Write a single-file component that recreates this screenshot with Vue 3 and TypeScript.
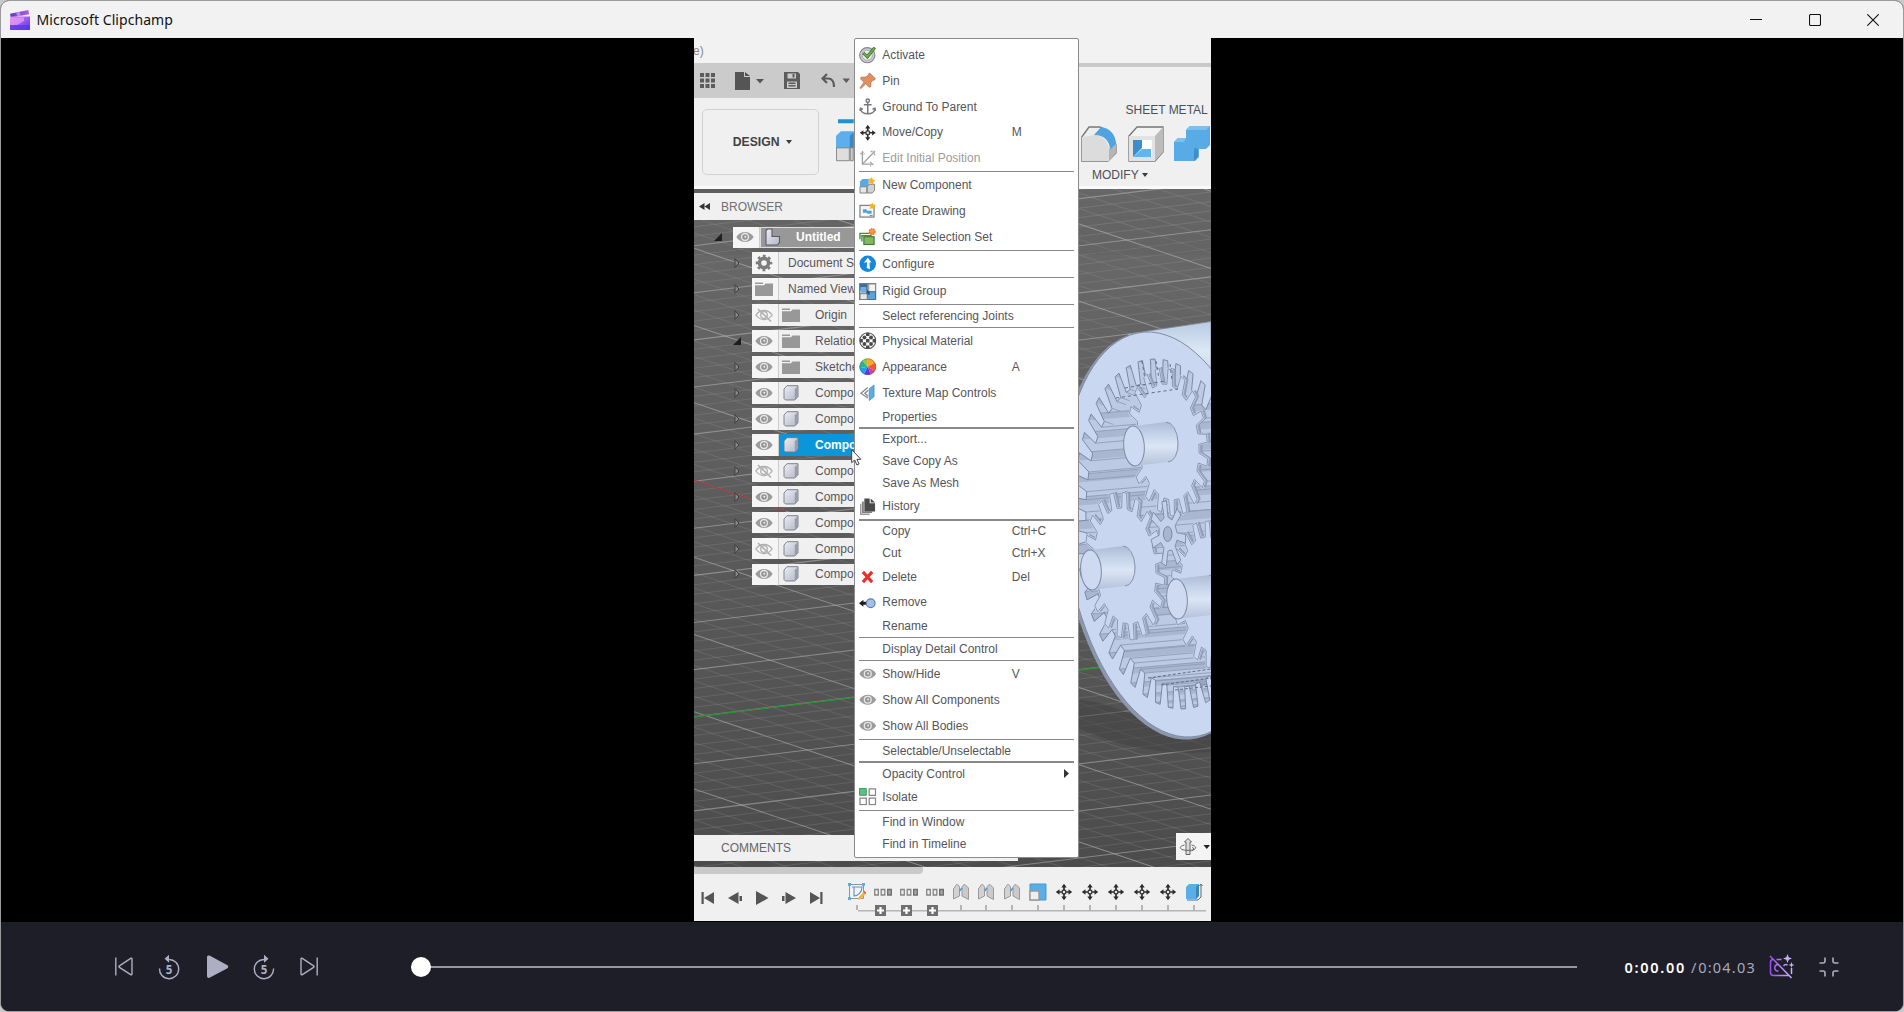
<script setup lang="ts">
interface MenuItem {
  label?: string
  icon?: string
  key?: string
  dim?: boolean
  sub?: boolean
  sep?: boolean
}

const sep: MenuItem = { sep: true }
const menu: MenuItem[] = [
  { label: 'Activate', icon: 'check' },
  { label: 'Pin', icon: 'pin' },
  { label: 'Ground To Parent', icon: 'anchor' },
  { label: 'Move/Copy', icon: 'move', key: 'M' },
  { label: 'Edit Initial Position', icon: 'axes', dim: true },
  sep,
  { label: 'New Component', icon: 'newcomp' },
  { label: 'Create Drawing', icon: 'drawing' },
  { label: 'Create Selection Set', icon: 'selset' },
  sep,
  { label: 'Configure', icon: 'configure' },
  sep,
  { label: 'Rigid Group', icon: 'rigid' },
  sep,
  { label: 'Select referencing Joints' },
  sep,
  { label: 'Physical Material', icon: 'material' },
  { label: 'Appearance', icon: 'wheel', key: 'A' },
  { label: 'Texture Map Controls', icon: 'texture' },
  { label: 'Properties' },
  sep,
  { label: 'Export...' },
  { label: 'Save Copy As' },
  { label: 'Save As Mesh' },
  { label: 'History', icon: 'history' },
  sep,
  { label: 'Copy', key: 'Ctrl+C' },
  { label: 'Cut', key: 'Ctrl+X' },
  { label: 'Delete', icon: 'delete', key: 'Del' },
  { label: 'Remove', icon: 'remove' },
  { label: 'Rename' },
  sep,
  { label: 'Display Detail Control' },
  sep,
  { label: 'Show/Hide', icon: 'eye', key: 'V' },
  { label: 'Show All Components', icon: 'eye' },
  { label: 'Show All Bodies', icon: 'eye' },
  sep,
  { label: 'Selectable/Unselectable' },
  sep,
  { label: 'Opacity Control', sub: true },
  { label: 'Isolate', icon: 'isolate' },
  sep,
  { label: 'Find in Window' },
  { label: 'Find in Timeline' },
]

interface Node {
  label: string
  eye?: 'eye' | 'eyeoff'
  icon: string
  open?: boolean
  active?: boolean
}
const nodes: Node[] = [
  { label: 'Document S', icon: 'cog' },
  { label: 'Named View', icon: 'folder' },
  { label: 'Origin', eye: 'eyeoff', icon: 'folder' },
  { label: 'Relation', eye: 'eye', icon: 'folder', open: true },
  { label: 'Sketche', eye: 'eye', icon: 'folder' },
  { label: 'Compo', eye: 'eye', icon: 'body' },
  { label: 'Compo', eye: 'eye', icon: 'body' },
  { label: 'Compo', eye: 'eye', icon: 'body', active: true },
  { label: 'Compo', eye: 'eyeoff', icon: 'body' },
  { label: 'Compo', eye: 'eye', icon: 'body' },
  { label: 'Compo', eye: 'eye', icon: 'body' },
  { label: 'Compo', eye: 'eyeoff', icon: 'body' },
  { label: 'Compo', eye: 'eye', icon: 'body' },
]

const features = [
  'sketch', 'pattern', 'pattern', 'pattern', 'joint', 'joint', 'joint', 'scale',
  'move', 'move', 'move', 'move', 'move', 'cube',
]
const transport = ['first', 'stepback', 'play', 'stepfwd', 'last']

/* Viewport floor grid: two families of parallel lines, every fifth one stronger. */
interface Line { x1: number; y1: number; x2: number; y2: number; major: boolean }
const grid: Line[] = []
for (let i = -60; i <= 26; i++) {
  const y = 716.7 + i * 9.42
  grid.push({ x1: 694, y1: y, x2: 1211, y2: y - 517 * 0.122, major: i % 5 === 0 })
}
for (let i = -36; i <= 26; i++) {
  const y = 480 + i * 15.45
  grid.push({ x1: 694, y1: y, x2: 1211, y2: y + 517 * 0.338, major: i % 5 === 0 })
}

/* Circles in the gear plane are seen as sheared ellipses. */
type Pt = [number, number]
function project(cx: number, cy: number, r: number, t: number, wide = 0.531, shear = 0.077): Pt {
  return [cx + r * (wide * Math.cos(t) - shear * Math.sin(t)), cy - r * Math.sin(t)]
}
function toothPoints(cx: number, cy: number, root: number, tip: number, n: number, phase: number, w: number): Pt[] {
  const pts: Pt[] = []
  const step = (Math.PI * 2) / n
  for (let i = 0; i < n; i++) {
    const a = i * step + phase
    pts.push(project(cx, cy, root, a - step * w))
    pts.push(project(cx, cy, tip, a - step * w * 0.6))
    pts.push(project(cx, cy, tip, a + step * w * 0.6))
    pts.push(project(cx, cy, root, a + step * w))
  }
  return pts
}
const toPath = (pts: Pt[]): string =>
  'M' + pts.map(([x, y]) => `${x.toFixed(1)} ${y.toFixed(1)}`).join('L') + 'Z'

const ringPts = toothPoints(1168, 534, 153, 175, 46, Math.PI / 2 + 0.02, 0.3)
const cavity = toPath(ringPts)
const centers: Pt[] = [[1168, 442], [1125, 566], [1211, 595]]
const phases = [0.05, 0.12, 0.2]
const gears = centers.map(([x, y], i) => ({ x, y, d: toPath(toothPoints(x, y, 58, 74, 19, phases[i], 0.27)) }))
const sun = toPath(toothPoints(1168, 534, 17, 33, 7, 0.75, 0.25))
const ellipse = (cx: number, cy: number, r: number) =>
  toPath(Array.from({ length: 90 }, (_, i) => project(cx, cy, r, (i / 45) * Math.PI, 0.512, 0.1)))
const shell = ellipse(1168, 534.5, 202.5)
const rim = ellipse(1165.5, 536, 203.5)

/* Internal teeth run back into the housing: one swept face per tooth gap plus edge lines. */
interface Flute { face: string; edge: string }
const flutes: Flute[] = []
for (let i = 0; i < 46; i++) {
  const [a, b, c, d] = ringPts.slice(i * 4, i * 4 + 4)
  const upper = b[1] < 405
  if (b[0] > 1172 && b[1] < 560) continue
  const dx = upper ? 9 : 150
  const dy = upper ? 3 : -13
  flutes.push({
    face: `M${b[0]} ${b[1]}L${c[0]} ${c[1]}l${dx} ${dy}L${b[0] + dx} ${b[1] + dy}z`,
    edge: `M${a[0]} ${a[1]}l${dx} ${dy}M${d[0]} ${d[1]}l${dx} ${dy}M${b[0]} ${b[1]}l${dx} ${dy}`,
  })
}
</script>

<template>
  <div class="window">
    <svg class="defs" width="0" height="0" aria-hidden="true">
      <defs>
        <linearGradient id="g-metal" x1="0" y1="0" x2="1" y2="1">
          <stop offset="0" stop-color="#eceef5" /><stop offset="1" stop-color="#b3b7c5" />
        </linearGradient>
        <linearGradient id="g-violet" x1="0" y1="0" x2="1" y2="0">
          <stop offset="0" stop-color="#9a4ff0" /><stop offset="1" stop-color="#c9b4f7" />
        </linearGradient>
        <linearGradient id="g-floor" x1="0" y1="0" x2="0" y2="1">
          <stop offset="0" stop-color="#6a6a6a" /><stop offset="1" stop-color="#4c4c4c" />
        </linearGradient>
        <linearGradient id="g-shaft" x1="0" y1="0" x2="0" y2="1">
          <stop offset="0" stop-color="#aebbd4" /><stop offset=".3" stop-color="#c6d4ec" />
          <stop offset=".55" stop-color="#dbe5f4" /><stop offset="1" stop-color="#b4c1da" />
        </linearGradient>
        <linearGradient id="g-cyl" x1="0" y1="0" x2="0" y2="1">
          <stop offset="0" stop-color="#b9cbe2" /><stop offset=".5" stop-color="#dce8f5" /><stop offset="1" stop-color="#c2d1e8" />
        </linearGradient>
        <linearGradient id="g-clip1" x1="0" y1="0" x2="1" y2="0">
          <stop offset="0" stop-color="#5a3bc8" /><stop offset="1" stop-color="#b45ee0" />
        </linearGradient>
        <linearGradient id="g-clip2" x1="0" y1="0" x2="1" y2="1">
          <stop offset="0" stop-color="#e58bf0" /><stop offset=".5" stop-color="#9a5cf0" /><stop offset="1" stop-color="#4b35e6" />
        </linearGradient>
      </defs>
      <symbol id="check" viewBox="0 0 18 18">
        <circle cx="8.5" cy="9.5" r="7.8" fill="#c9cbd0" stroke="#84868c" stroke-width="1.2" />
        <circle cx="8.5" cy="9.5" r="5.2" fill="#eceef0" stroke="#9b9da3" stroke-width=".8" />
        <path d="M3.8 8.2l2-1.6 2.5 2.6L15 1.2l2 1.3-8.3 10.6z" fill="#6cae45" stroke="#3c6b2a" stroke-width=".9" />
      </symbol>
      <symbol id="pin" viewBox="0 0 18 18">
        <path d="M10.500 1l1.500 1 4.800 4.800-.6 1.300-2 .4-2 2.600v4l-1.800.6-3.500-3.500L2 17l-1-.5 4-6L1.500 7l.7-1.700 4.600-.1 2.800-2z" fill="#df9061" stroke="#b56b43" stroke-width=".7" />
      </symbol>
      <symbol id="anchor" viewBox="0 0 18 18">
        <g fill="none" stroke="#77797c" stroke-width="1.5"><circle cx="9" cy="2.7" r="1.7" /><path d="M9 4.4v12M5 7h8M1.5 11.2c.6 3.6 3.6 5 7.5 5s6.9-1.4 7.5-5M.7 13l1-2.4 2.4 1M17.3 13l-1-2.4-2.4 1" /></g>
      </symbol>
      <symbol id="move" viewBox="0 0 18 18">
        <path d="M9 3v12M3 9h12" stroke="#2b2b2b" stroke-width="1.700" />
        <path d="M9 .800l2.700 3.700H6.300zM9 17.200l2.700-3.700H6.300zM.8 9l3.700-2.700v5.400zM17.200 9l-3.700-2.700v5.400z" fill="#2b2b2b" />
        <rect x="7.300" y="7.300" width="3.400" height="3.400" fill="#e8e8e8" stroke="#2b2b2b" stroke-width="1" />
      </symbol>
      <symbol id="axes" viewBox="0 0 18 18">
        <g fill="none" stroke="#a2a2a2" stroke-width="1.4"><path d="M3.500 2v12.500H14M3.500 14.500L16 1.500" /><path d="M1.500 4.500l2-2.800 2 2.800M11.500 12.300l2.700 2.200-2.700 2.200M12 1.500h4v4" stroke-dasharray="2 1" /></g>
      </symbol>
      <symbol id="newcomp" viewBox="0 0 18 18">
        <path d="M1 4.500l2.500-2.500H10v7L8 10H1z" fill="#5aa9e2" /><path d="M1 10h7v6.500H1z" fill="#e4e5e8" stroke="#777" stroke-width=".9" />
        <path d="M8.500 10l2-2.500h5.500v6.500l-2.500 2.500h-5z" fill="#cfd0d4" stroke="#777" stroke-width=".9" />
        <path d="M13 0l1.200 2.600L17 3.400l-2.200 1.800L14.500 8l-2-1.600L9.500 7l1.300-2.800L9.500 1.500l2.500.3z" fill="#f9b21c" />
      </symbol>
      <symbol id="drawing" viewBox="0 0 18 18">
        <rect x="1" y="3.500" width="14.500" height="12" fill="#f5f5f6" stroke="#808388" stroke-width="1.300" />
        <path d="M4 7.500h4v1.500h5v3H8.500V11H4z" fill="#4fa0dc" /><path d="M11 14h3" stroke="#777" />
        <path d="M13.500 0l1 2.600 3 .6-2.200 1.900.4 2.900-2.200-1.500-2.700.8.9-2.600-1.300-2.200 2.400-.1z" fill="#f9b21c" />
      </symbol>
      <symbol id="selset" viewBox="0 0 18 18">
        <path d="M1 11.500V5.500h10" fill="none" stroke="#3f8c3c" stroke-width="1.400" /><path d="M3 14V8h10" fill="none" stroke="#3f8c3c" stroke-width="1.400" />
        <rect x="5" y="9" width="10.500" height="8" fill="#83b863" stroke="#3c7a35" stroke-width="1.200" />
        <circle cx="13.500" cy="3.800" r="2.800" fill="#f3a03e" stroke="#e8762c" stroke-width="1.800" stroke-dasharray="1.600 .7" />
      </symbol>
      <symbol id="configure" viewBox="0 0 18 18">
        <circle cx="9" cy="9" r="8.500" fill="#1687d9" /><path d="M9 2.800l4 5-2.200-.4.400 7.200-3.200-1.300.2-5.900L5 8z" fill="#fff" />
      </symbol>
      <symbol id="rigid" viewBox="0 0 18 18">
        <rect x=".6" y=".6" width="16.800" height="16.800" fill="#e6e7e9" stroke="#6c7076" />
        <path d="M1 1h8v7H1z" fill="#3f6f98" /><path d="M1.500 4h6v6h-6z" fill="#6db1e2" /><path d="M10 1h7v8h-7z" fill="#f3f3f3" stroke="#888" /><path d="M8.500 9H17v8H8.500z" fill="#58a5dc" stroke="#3b6f9b" /><path d="M8 7l3 2v3H7z" fill="#2f5578" /><path d="M1 11h7.500v6H1z" fill="#e6e6e8" stroke="#777" />
      </symbol>
      <symbol id="material" viewBox="0 0 18 18">
        <circle cx="9" cy="9" r="8.200" fill="#fff" stroke="#555" stroke-width="1.200" />
        <g fill="#4b4b4b"><path d="M7.200 1h3.600v3H7.200zM7.200 7.200h3.600v3.600H7.200zM7.200 14h3.600v3H7.200zM1 7.200h3v3.600H1zM14 7.200h3v3.600h-3z" /><circle cx="5.600" cy="5.600" r="2" /><circle cx="12.400" cy="5.600" r="2" /><circle cx="5.600" cy="12.400" r="2" /><circle cx="12.400" cy="12.400" r="2" /></g>
      </symbol>
      <symbol id="wheel" viewBox="0 0 18 18">
        <path d="M9 9V.5A8.500 8.500 0 0 1 16.400 4.800z" fill="#f7a72c" /><path d="M9 9l7.400-4.200a8.500 8.500 0 0 1 0 8.500z" fill="#f0592b" />
        <path d="M9 9l7.400 4.300A8.500 8.500 0 0 1 12 17z" fill="#d33f8d" /><path d="M9 9l3 8a8.500 8.500 0 0 1-7 -.5z" fill="#5f35e8" />
        <path d="M9 9l-4 7.500a8.500 8.500 0 0 1-4.400-6z" fill="#1f9df0" /><path d="M9 9L.6 10.500A8.500 8.500 0 0 1 3.500 2.500z" fill="#27b78b" /><path d="M9 9L3.500 2.500A8.500 8.500 0 0 1 9 .5z" fill="#93c83d" />
        <circle cx="9" cy="9" r="8.300" fill="none" stroke="#666" stroke-width=".5" />
      </symbol>
      <symbol id="texture" viewBox="0 0 18 18">
        <path d="M9 3.500L2 9.500l7 5M9.500 6.500L6 9.500l3.500 3" fill="none" stroke="#85878b" stroke-width="1.300" />
        <path d="M10.500 5l5-4v12l-5 4z" fill="#5aaee4" stroke="#3e86b8" stroke-width=".7" />
      </symbol>
      <symbol id="history" viewBox="0 0 18 18">
        <path d="M1 6v11.500h10V16H2.500V6z" fill="#9a9a9a" /><path d="M3 3.500v12h10.500V14H5V3.500z" fill="#808080" /><path d="M5.500.5H11v5h5.500V14h-11z" fill="#4a4a4a" /><path d="M12 .5l4.500 4H12z" fill="#4a4a4a" />
      </symbol>
      <symbol id="delete" viewBox="0 0 18 18"><path d="M4 4l9.500 10.500M13.500 4L4 14.500" stroke="#ea2f2f" stroke-width="3.200" /></symbol>
      <symbol id="remove" viewBox="0 0 18 18">
        <path d="M0 9.500l4.500-3.500v2h3.500v3H4.500v2z" fill="#1c1c1c" /><circle cx="12" cy="9.500" r="4.500" fill="#a3c0ea" stroke="#627da6" stroke-width="1.200" />
      </symbol>
      <symbol id="eye" viewBox="0 0 18 18">
        <path d="M.3 9C4.500 2.200 13.500 2.200 17.700 9 13.500 15.800 4.500 15.800.3 9z" fill="#9b9b9b" /><circle cx="9" cy="9" r="4.200" fill="#e6e6e6" /><circle cx="9" cy="9" r="2.800" fill="#949494" /><circle cx="9.300" cy="8.800" r="1" fill="#eee" />
      </symbol>
      <symbol id="eyeoff" viewBox="0 0 18 18">
        <g fill="none" stroke="#b0b0b0" stroke-width="1.300"><path d="M.8 9C5 3 13 3 17.200 9 13 15 5 15 .8 9z" /><circle cx="9" cy="9" r="3.300" /><path d="M3 3l13 12.500" stroke-width="1.600" /></g>
      </symbol>
      <symbol id="isolate" viewBox="0 0 18 18">
        <path d="M.5.5h7v7h-7z" fill="#5cc07f" stroke="#3f9a60" /><path d="M10.500 1h6.500v6.500h-6.500zM1 10.500h6.500V17H1zM10.500 10.500h6.500V17h-6.500z" fill="#fff" stroke="#858585" stroke-width="1.300" />
      </symbol>
      <symbol id="cog" viewBox="0 0 18 18">
        <circle cx="9" cy="9" r="4.600" fill="none" stroke="#7d7d7d" stroke-width="3.600" />
        <circle cx="9" cy="9" r="7.100" fill="none" stroke="#7d7d7d" stroke-width="2.400" stroke-dasharray="2.790 2.790" stroke-dashoffset="1.400" />
      </symbol>
      <symbol id="folder" viewBox="0 0 18 18"><path d="M0 2.500h8v1.600H0zM0 5.300h9L10.500 3.500H18v12.500H0z" fill="#989898" /></symbol>
      <symbol id="body" viewBox="0 0 18 18">
        <path d="M2 5l3-3.300h11v11L12.800 16H3.500L2 14.500z" fill="url(#g-metal)" stroke="#747884" stroke-width=".9" /><path d="M12.800 5.200L16 1.700v11L12.800 16z" fill="#989dab" />
      </symbol>
      <symbol id="part" viewBox="0 0 18 18">
        <path d="M2 2.500l1.500-1.500H8v7.500h7.500v5.800L13.500 17H2z" fill="url(#g-metal)" stroke="#575b68" stroke-width="1.100" />
      </symbol>
      <symbol id="sketch" viewBox="0 0 18 18">
        <path d="M1.500 1.500h14v14h-14z" fill="#f4f4f4" stroke="#8e9499" /><path d="M4 4h10c0 5-4 9-8 9V4" fill="none" stroke="#5b93c4" stroke-width="1.100" />
        <path d="M0 0h3v3H0zM14 0h3v3h-3zM0 14h3v3H0z" fill="#5aaee4" /><path d="M10 16.800l1-3L15.500 9l2 2-4.500 5z" fill="#f2b23d" /><path d="M15.500 9l1-1 2 2-1 1z" fill="#e0402c" />
      </symbol>
      <symbol id="pattern" viewBox="0 0 18 18">
        <path d="M.7 6.500h3.600v5.500H.7zM7.200 6.500h3.600v5.500H7.200z" fill="#eee" stroke="#858585" stroke-width="1.300" /><path d="M13.700 6.500h3.600v5.500h-3.600z" fill="#aaa" stroke="#707070" stroke-width="1.400" />
      </symbol>
      <symbol id="joint" viewBox="0 0 18 18">
        <path d="M1.500 16V6l3-4.500c2 0 3 1.500 3 3.500v8z" fill="#d2d2d2" stroke="#9a9a9a" /><path d="M10 13V5c0-2 1-3 3-3.500L16.500 5v11.500z" fill="#cacaca" stroke="#9a9a9a" /><path d="M7.500 8L10 5" stroke="#4e9bd6" stroke-width="1.600" />
      </symbol>
      <symbol id="scale" viewBox="0 0 18 18">
        <path d="M1 1h16v16H1z" fill="#5aaee6" stroke="#4b97cb" /><path d="M1 8h9v9H1z" fill="#eee" stroke="#999" stroke-width="1.400" />
      </symbol>
      <symbol id="cube" viewBox="0 0 18 18">
        <path d="M1 4l3-3h10v12l-3 3H1z" fill="#5aaee6" /><path d="M11 4l3-3v12l-3 3z" fill="#3985bd" /><path d="M16 2v12l-3 3H2M14.500 3L16 1l1.500 2" fill="none" stroke="#666" />
      </symbol>
      <symbol id="first" viewBox="0 0 14 14"><path d="M.5 1h2.200v12H.5zM13 1v12L3 7z" fill="#555" /></symbol>
      <symbol id="last" viewBox="0 0 14 14"><path d="M11.300 1h2.200v12h-2.200zM1 1v12l10-6z" fill="#555" /></symbol>
      <symbol id="stepback" viewBox="0 0 14 14"><path d="M10.500 1v12L0 7zM11.500 5H14v5h-2.500z" fill="#555" /></symbol>
      <symbol id="stepfwd" viewBox="0 0 14 14"><path d="M3.500 1v12L14 7zM0 5h2.500v5H0z" fill="#555" /></symbol>
      <symbol id="play" viewBox="0 0 14 14"><path d="M1 0v14l12.500-7z" fill="#555" /></symbol>
    </svg>

    <header class="titlebar">
      <svg class="logo" width="20" height="20" viewBox="0 0 20 20">
        <path d="M0 3.800L18.300 0l.8 4.200L.8 7.500z" fill="url(#g-clip1)" /><path d="M6 2.500l3.500-.7 1.500 4-3.600.6z" fill="#b98cf0" />
        <path d="M0 7.500l2-.9H20V20H0z" fill="url(#g-clip2)" /><path d="M0 7.500h14V11L7 15H0z" fill="#e69af6" opacity=".75" /><path d="M0 15h20v5H0z" fill="#5a35ee" opacity=".75" />
      </svg>
      <span class="title">Microsoft Clipchamp</span>
      <svg class="wbtn" width="12" height="12" viewBox="0 0 12 12"><path d="M0 5.500h12" /></svg>
      <svg class="wbtn" width="12" height="12" viewBox="0 0 12 12"><rect x=".5" y=".5" width="11" height="11" rx="1.200" /></svg>
      <svg class="wbtn" width="12" height="12" viewBox="0 0 12 12"><path d="M.3.300l11.400 11.400M11.700.300L.3 11.700" /></svg>
    </header>

    <main class="stage">
      <div class="frame">
        <div class="doc-tab">e)</div>
        <div class="quick">
          <div class="quick-left">
            <svg width="17" height="17" viewBox="0 0 17 17"><path d="M1 1h4v4H1zM6.500 1h4v4h-4zM12 1h4v4h-4zM1 6.500h4v4H1zM6.500 6.500h4v4h-4zM12 6.500h4v4h-4zM1 12h4v4H1zM6.500 12h4v4h-4zM12 12h4v4h-4z" fill="#5c5c5c" /></svg>
            <svg class="q-file" width="29" height="18" viewBox="0 0 29 18"><path d="M0 0h9v5h6v13H0zM10 0l5 4h-5z" fill="#555" /><path d="M21 7h8l-4 4.500z" fill="#555" /></svg>
            <svg class="q-save" width="16" height="17" viewBox="0 0 16 17"><path d="M0 0h14l2 2v15H0zM3.500 1.500v5h8.500v-5zM3 9.500V16h10V9.500z" fill="#5c5c5c" fill-rule="evenodd" /><path d="M8.500 2h2v3.500h-2zM4.500 10.500h7v1.500h-7zM4.500 13h7v1.500h-7z" fill="#5c5c5c" /></svg>
            <svg class="q-undo" width="29" height="16" viewBox="0 0 29 16"><path d="M6 1L1.500 5.500 6 10M1.500 5.500H7c4 0 6 3 6 8.500" fill="none" stroke="#5c5c5c" stroke-width="2.200" /><path d="M21.500 5.500h7.500l-3.700 4.500z" fill="#5c5c5c" /></svg>
          </div>
        </div>
        <div class="ribbon">
          <div class="design">DESIGN <i class="caret"></i></div>
          <svg class="new-tool" width="18" height="45" viewBox="0 0 18 45"><path d="M2 0h16v4H2z" fill="#1a94cc" /><path d="M0 17l5-5h13v17H0z" fill="#5daeea" /><path d="M14 17l4-4v16h-4z" fill="#3d87bf" /><path d="M.5 29h13v13H.5z" fill="#dedede" stroke="#888" /><path d="M14.500 29h3v13h-3z" fill="#ccc" stroke="#888" /></svg>
          <div class="modify">
            <div class="tab">SHEET METAL</div>
            <div class="tools">
              <svg width="36" height="36" viewBox="0 0 36 36"><path d="M.8 11L8 1h11l8 4 6 9 2 5v8l-8 8H.8z" fill="#ededee" stroke="#777" stroke-width="1.300" /><path d="M.8 11L14 9c9 1 14 8 14 16v10H.8z" fill="#dcdcdd" /><path d="M28 23l7-6v10l-7 8z" fill="#b5b5b6" /><path d="M13 9l7-8c9 1 15 8 15 17l-6 5.500C29 15 23 9 13 9z" fill="#4fa3e0" /></svg>
              <svg width="36" height="36" viewBox="0 0 36 36"><path d="M1 10l8-9h26v25l-8 9H1z" fill="#f3f3f3" stroke="#777" stroke-width="1.300" /><path d="M27 10l8-9v25l-8 9z" fill="#bcbcbd" /><path d="M1 10h26v25H1z" fill="#e2e2e3" /><path d="M5 14h19v17H5z" fill="#fff" /><path d="M5 14h9v8L5 31z" fill="#3b8dcc" /><path d="M5 31l9-8h9v8z" fill="#63b3ec" /></svg>
              <svg width="36" height="36" viewBox="0 0 36 36"><path d="M0 16l4-4h8V4l4-4h20v19l-4 4h-7v8l-4 4H0z" fill="#59abe6" /><path d="M12 4l4-4h20l-4 4zM0 16l4-4h8l-2 4z" fill="#79c1f0" /><path d="M24 23v8l-4 4V22z" fill="#3e8ecb" /></svg>
            </div>
            <div class="group">MODIFY <i class="caret"></i></div>
          </div>
        </div>

        <div class="viewport">
          <svg class="scene" width="517" height="678" viewBox="694 189 517 678">
            <defs><clipPath id="c-cavity"><path :d="cavity" /></clipPath></defs>
            <rect x="694" y="189" width="517" height="678" fill="url(#g-floor)" />
            <line v-for="(l, i) in grid" :key="i" :x1="l.x1" :y1="l.y1" :x2="l.x2" :y2="l.y2" :class="l.major ? 'major' : 'minor'" />
            <path d="M694 717l517-63" stroke="#2e8f35" stroke-width="1.300" />
            <path d="M694 480l92 31" stroke="#9c3a40" stroke-width="1.300" />
            <path d="M1078 700c40 0 80 36 133 32v20c-60 4-100-10-133-24z" fill="#3d3d3d" opacity=".45" />
            <path d="M1128 334l83-12.500v60l-60-10z" fill="url(#g-cyl)" stroke="#7d889b" stroke-width=".8" />
            <path :d="rim" fill="#8b97ad" />
            <path :d="shell" fill="#cad7f0" stroke="#7f8ca3" stroke-width="1" />
            <path :d="cavity" fill="#bccae3" />
            <g clip-path="url(#c-cavity)">
              <template v-for="(f, i) in flutes" :key="i">
                <path :d="f.face" fill="#a9b7d1" />
                <path :d="f.edge" fill="none" stroke="#8a98b1" stroke-width=".8" />
              </template>
            </g>
            <path :d="cavity" fill="none" stroke="#74829b" stroke-width=".9" stroke-linejoin="round" />
            <g v-for="(g, i) in gears" :key="i">
              <path :d="g.d" fill="#9aa8c2" stroke="#8391aa" stroke-width=".8" transform="translate(3 -.6)" />
              <path :d="g.d" fill="#c9d6ef" stroke="#c9d6ef" stroke-width="2" stroke-linejoin="round" />
              <path :d="g.d" fill="#c9d6ef" stroke="#8391aa" stroke-width=".9" stroke-linejoin="round" />
              <path :d="`M${g.x - 34} ${g.y - 16}L${g.x - 2} ${g.y - 20}A10 20 -4 0 1 ${g.x} ${g.y + 20}L${g.x - 34} ${g.y + 24}z`" fill="url(#g-shaft)" />
              <path :d="`M${g.x - 2} ${g.y - 20}A11 20 -4 0 1 ${g.x} ${g.y + 20}`" fill="none" stroke="#8492aa" />
              <ellipse :cx="g.x - 34" :cy="g.y + 4" rx="10.300" ry="20" :transform="`rotate(-4 ${g.x - 34} ${g.y + 4})`" fill="#cddaf2" stroke="#7d8ba4" />
            </g>
            <path :d="sun" fill="#c4d1ea" stroke="#7d8ba4" stroke-width=".9" stroke-linejoin="round" />
            <ellipse cx="1167.700" cy="534" rx="4.300" ry="7.500" fill="#a8b6d0" stroke="#7d8ba4" />
            <path d="M1116 398l62-9M1125 388l40-7M1142 361l3 18M1156 361l3 18M1170 364l2 16" fill="none" stroke="#5f6c85" stroke-dasharray="3 3" />
            <path d="M1148 678l63-9M1161 685l50-7M1175 690l36-4" fill="none" stroke="#5f6c85" stroke-dasharray="3 2" />
          </svg>
          <div class="browser">
            <div class="browser-head">
              <svg width="11" height="7" viewBox="0 0 11 7"><path d="M5.500 0v7L0 3.500zM11 0v7L5.500 3.500z" fill="#333" /></svg>
              <span>BROWSER</span>
            </div>
            <div class="tree">
              <div class="row root">
                <svg class="twist" width="8" height="8" viewBox="0 0 8 8"><path d="M8 0v8H0z" fill="#1e1e1e" /></svg>
                <span class="cell eyecell"><svg width="18" height="18"><use href="#eye" /></svg></span>
                <span class="rootbody"><svg width="18" height="18"><use href="#part" /></svg><b>Untitled</b></span>
              </div>
              <div v-for="(n, i) in nodes" :key="i" class="row">
                <svg v-if="n.open" class="twist" width="8" height="8" viewBox="0 0 8 8"><path d="M8 0v8H0z" fill="#1e1e1e" /></svg>
                <svg v-else class="twist" width="7" height="10" viewBox="0 0 7 10"><path d="M1.500.7v8.600L5.500 5z" fill="#888" stroke="#3e3e3e" /></svg>
                <span class="cell eyecell"><svg width="18" height="18"><use :href="'#' + (n.eye ?? n.icon)" /></svg></span>
                <span class="cell name" :class="{ active: n.active, flat: !n.eye }">
                  <svg v-if="n.eye" width="18" height="18"><use :href="'#' + n.icon" /></svg>
                  <span>{{ n.label }}</span>
                </span>
              </div>
            </div>
          </div>
          <div class="comments">COMMENTS</div>
          <div class="nav">
            <svg width="31" height="18" viewBox="0 0 31 18"><g fill="#ddd" stroke="#666" stroke-width="1"><path d="M7 16.500V4H5.500L9 .5 12.500 4H11v12.500z" /><path d="M5.500 7C1 8 0 10 3 11.500c3 1.200 9 1.200 12 0 3-1.500 2-3.500-2.500-4.500M12.500 13l2.500-1.500L13.500 9" fill="none" /></g><path d="M24.500 7H31l-3.200 4z" fill="#222" /></svg>
          </div>
        </div>

        <div class="timeline">
          <div class="thumb"></div>
          <div class="tl-row">
            <div class="transport">
              <svg v-for="t in transport" :key="t" width="14" height="14"><use :href="'#' + t" /></svg>
            </div>
            <div class="features">
              <div v-for="(f, i) in features" :key="i" class="feature">
                <svg width="18" height="18"><use :href="'#' + f" /></svg>
                <span class="track" :class="{ start: i === 0 }">
                  <svg v-if="f === 'pattern'" width="11" height="11" viewBox="0 0 11 11"><path d="M0 0h11v11H0z" fill="#6f6f6f" /><path d="M5.500 2v7M2 5.500h7" stroke="#fff" stroke-width="2.200" /></svg>
                  <i v-else class="tick"></i>
                </span>
              </div>
            </div>
          </div>
        </div>

        <div class="menu">
          <template v-for="(m, i) in menu" :key="i">
            <hr v-if="m.sep" />
            <div v-else class="item" :class="{ tall: m.icon, dim: m.dim }">
              <span class="slot"><svg v-if="m.icon" width="17.500" height="17.500"><use :href="'#' + m.icon" /></svg></span>
              <span class="label">{{ m.label }}</span>
              <span class="key">{{ m.key }}</span>
              <svg v-if="m.sub" width="5" height="9" viewBox="0 0 5 9"><path d="M0 0v9l5-4.500z" fill="#333" /></svg>
            </div>
          </template>
        </div>
        <svg class="cursor" width="11" height="17" viewBox="0 0 11 17"><path d="M.7.700v13l3-2.700 2.200 5 2.200-1-2.200-4.700h4z" fill="#fff" stroke="#444" /></svg>
      </div>
    </main>

    <footer class="player">
      <div class="buttons">
        <svg width="18" height="19" viewBox="0 0 18 19"><path d="M.8.500v18M17 2v15c0 .8-.7 1.100-1.300.7L4.400 10.300c-.6-.4-.6-1.100 0-1.500L15.700 1.300c.6-.4 1.300-.1 1.300.7z" /></svg>
        <svg width="22" height="26" viewBox="0 0 22 26"><path d="M1.500 14.500A9.600 9.600 0 1 0 11 5.500" /><path class="solid" d="M11 .8v8L6.500 4.800z" /><text x="11" y="19.500">5</text></svg>
        <svg width="22" height="24" viewBox="0 0 22 24"><path class="solid" d="M0 2.300C0 .5 1.500 0 3 .8l17 9.100c1.700.9 1.700 2.700 0 3.600L3 22.600c-1.500.8-3 .2-3-1.500z" /></svg>
        <svg width="22" height="26" viewBox="0 0 22 26"><path d="M20.500 14.500A9.600 9.600 0 1 1 11 5.500" /><path class="solid" d="M11 .8v8l4.500-4z" /><text x="11" y="19.500">5</text></svg>
        <svg width="18" height="19" viewBox="0 0 18 19"><path d="M17.200.500v18M1 2v15c0 .8.700 1.100 1.300.7l11.300-7.400c.6-.4.6-1.100 0-1.500L2.300 1.300C1.700.9 1 1.200 1 2z" /></svg>
      </div>
      <div class="slider"><span class="knob"></span></div>
      <div class="time"><b>0:00.00</b><span class="slash">/</span><span class="total">0:04.03</span></div>
      <svg class="captions" width="26" height="26" viewBox="0 0 26 26" fill="none" stroke="url(#g-violet)" stroke-width="1.500">
        <path d="M4 5.500C2.200 5.500 1.500 7 1.500 8.500v10c0 2 1 3 3 3h15M7.500 5.500h5M22.500 14v6M9.500 10.500c-5 0-5 7 0 6.500M14.500 12c1-1.500 2.500-1.800 4-1" /><path d="M1 2l21.500 22" />
        <path d="M18.500 0l1.200 3.300L23 4.500l-3.300 1.200-1.200 3.300-1.200-3.300L14 4.500l3.300-1.200zM22.500 8l.8 2.200 2.200.8-2.200.8-.8 2.200-.8-2.200-2.200-.8 2.200-.8z" fill="#c4b3f8" stroke="none" />
      </svg>
      <svg class="exit" width="20" height="20" viewBox="0 0 20 20"><path d="M.5 6H4c1.300 0 2-.7 2-2V.5M19.500 6H16c-1.300 0-2-.7-2-2V.5M.5 14H4c1.300 0 2 .7 2 2v3.500M19.500 14H16c-1.300 0-2 .7-2 2v3.500" /></svg>
    </footer>
  </div>
</template>

<style>
body { background: #c9c9c9; overflow: hidden; }
</style>

<style scoped>
* { box-sizing: border-box; }
.defs { position: absolute; }
.window { width: 1904px; height: 1012px; border: 1px solid #9b9b9b; border-radius: 9px; overflow: hidden; display: flex; flex-direction: column; background: #1e1e28; }
.titlebar { height: 37px; flex: none; background: #f2f2f2; display: flex; align-items: center; padding: 0 24px 0 9px; }
.title { flex: 1; margin-left: 6.500px; font: 14px "Noto Sans", "Open Sans", sans-serif; letter-spacing: .06px; color: #111; }
.wbtn { fill: none; stroke: #111; stroke-width: 1.1; margin-left: 46.500px; }
.stage { height: 884px; flex: none; background: #000; display: flex; }
.frame { position: relative; width: 517px; height: 883px; margin-left: 693px; overflow: hidden; display: flex; flex-direction: column; background: #f0f0f0; font: 12px "Liberation Sans", Arial, sans-serif; color: #55555a; }
.doc-tab { height: 25px; flex: none; background: #f2f2f2; line-height: 26px; margin-left: -1px; color: #888; }
.quick { height: 35px; flex: none; border-top: 4px solid #c9c9c9; }
.quick-left { width: 162px; height: 35px; margin-top: -4px; background: #cbcbcb; display: flex; align-items: center; padding-left: 5px; }
.q-file { margin-left: 19px; }
.q-save { margin-left: 20px; }
.q-undo { margin-left: 20.500px; }
.ribbon { height: 91px; flex: none; display: flex; border-bottom: 3px solid #fafafa; background: #f0f0f0; }
.design { width: 119px; height: 66px; margin: 10.500px 0 0 8px; border: 1px solid #d2d2d2; border-radius: 5px; display: flex; align-items: center; justify-content: center; gap: 6px; padding-left: 3px; font-weight: bold; font-size: 12.200px; color: #424242; }
.caret { display: inline-block; border: 3px solid transparent; border-top: 4px solid #3c3c3c; border-bottom: 0; vertical-align: 2px; }
.new-tool { margin: 21px 0 0 17px; }
.modify { margin-left: 227px; width: 130px; flex: none; display: flex; flex-direction: column; }
.tab { margin: 5px 0 0 44.500px; height: 14px; line-height: 14px; color: #4b4f58; white-space: nowrap; }
.tools { display: flex; gap: 10.500px; margin-top: 9px; }
.group { margin: 5.500px 0 0 11px; line-height: 14px; color: #4b4f58; }
.viewport { position: relative; height: 678px; flex: none; display: flex; flex-direction: column; }
.scene { position: absolute; inset: 0; }
.minor { stroke: #aaa; stroke-width: .9; opacity: .22; }
.major { stroke: #bdbdbd; stroke-width: 1.1; opacity: .52; }
.browser { position: relative; width: 162px; overflow: hidden; border-top: 4px solid #5d5d5d; }
.browser-head { height: 27px; background: #f0f0f0; display: flex; align-items: center; gap: 11px; padding-left: 5px; color: #707070; }
.tree { padding-top: 6.500px; }
.row { height: 21.600px; margin-bottom: 4.350px; padding-left: 39px; display: flex; align-items: stretch; }
.row.root { padding-left: 20px; }
.twist { width: 8px; margin-right: 11px; align-self: center; flex: none; }
.cell { background: #f0f0f0; display: flex; align-items: center; }
.eyecell { width: 27px; flex: none; justify-content: center; padding-right: 2px; border-right: 1px solid #ccc; background: #f5f5f5; }
.name { width: 90px; flex: none; padding-left: 3px; gap: 15px; white-space: nowrap; }
.name svg { flex: none; }
.name.flat { padding-left: 9px; }
.name.active { background: #0a96d8; color: #fff; font-weight: bold; }
.rootbody { flex: none; width: 110px; background: #989898; display: flex; align-items: center; gap: 14px; padding-left: 3px; color: #fff; border: 1px solid #ddd; }
.comments { position: relative; margin-top: auto; margin-bottom: 6px; width: 324px; height: 26px; background: #f0f0f0; padding-left: 27px; line-height: 26px; color: #666; }
.nav { position: absolute; right: 0; bottom: 7px; width: 35px; height: 27px; background: #f4f4f4; display: flex; align-items: center; padding-left: 3px; }
.timeline { height: 54px; flex: none; background: #f0f0f0; }
.thumb { width: 229px; height: 7px; background: #c9c9c9; border-radius: 0 0 4px 0; }
.tl-row { display: flex; }
.transport { display: flex; gap: 13px; padding: 16.500px 0 0 6.500px; width: 150px; flex: none; }
.features { display: flex; padding-top: 9px; }
.feature { width: 25.900px; flex: none; display: flex; flex-direction: column; align-items: center; }
.track { width: 100%; height: 12px; margin-top: 4px; display: flex; justify-content: center; align-items: flex-start; background: linear-gradient(#b5b5b5, #b5b5b5) 0 5px / 100% 1.500px no-repeat; }
.track svg { margin-left: -4px; }
.track.start { background-position: 14px 5px; }
.tick { width: 2px; height: 5px; background: #b5b5b5; }
.menu { position: absolute; left: 160px; top: 0; width: 225px; height: 820px; background: #fff; border: 1.500px solid #8a8a8a; border-radius: 2px; padding: 3px 4px 0; }
.menu hr { margin: 0; border: 0; height: 1.250px; background: #888; }
.item { height: 21.600px; display: flex; align-items: center; padding-right: 5px; }
.item.tall { height: 25.850px; }
.item.dim { color: #9c9c9c; }
.slot { width: 23.300px; height: 17.500px; flex: none; }
.label { width: 129.500px; flex: none; white-space: nowrap; }
.key { flex: 1; }
.cursor { position: absolute; left: 157px; top: 411px; }
.player { flex: 1; display: flex; align-items: center; background: #1e1e28; }
.buttons { display: flex; align-items: center; margin-left: 113.500px; flex: none; }
.buttons svg { flex: none; fill: none; stroke: #adadc4; stroke-width: 1.4; overflow: visible; }
.buttons svg:nth-child(2) { margin-left: 25px; }
.buttons svg:nth-child(3) { margin-left: 27.500px; }
.buttons svg:nth-child(4) { margin-left: 23.500px; }
.buttons svg:nth-child(5) { margin-left: 25.500px; }
.buttons .solid { fill: #adadc4; stroke: none; }
.buttons text { fill: #adadc4; stroke: none; text-anchor: middle; font: bold 11.500px "Noto Sans", sans-serif; }
.slider { flex: none; margin-left: 92.500px; width: 1166px; height: 20px; display: flex; align-items: center; background: linear-gradient(#98989c, #98989c) 0 50% / 100% 2px no-repeat; }
.knob { width: 20px; height: 20px; border-radius: 50%; background: #fff; }
.time { flex: none; margin-left: 48px; width: 142px; font: 14.500px "Noto Sans", sans-serif; letter-spacing: 1px; color: #a9a9bf; white-space: nowrap; }
.time b { color: #fff; font-weight: 600; letter-spacing: 1.700px; }
.total { letter-spacing: 1.200px; }
.slash { margin: 0 1px 0 5px; }
.captions { flex: none; margin-left: 2px; }
.exit { flex: none; margin-left: 24.500px; fill: none; stroke: #adadc4; stroke-width: 1.6; }
</style>
